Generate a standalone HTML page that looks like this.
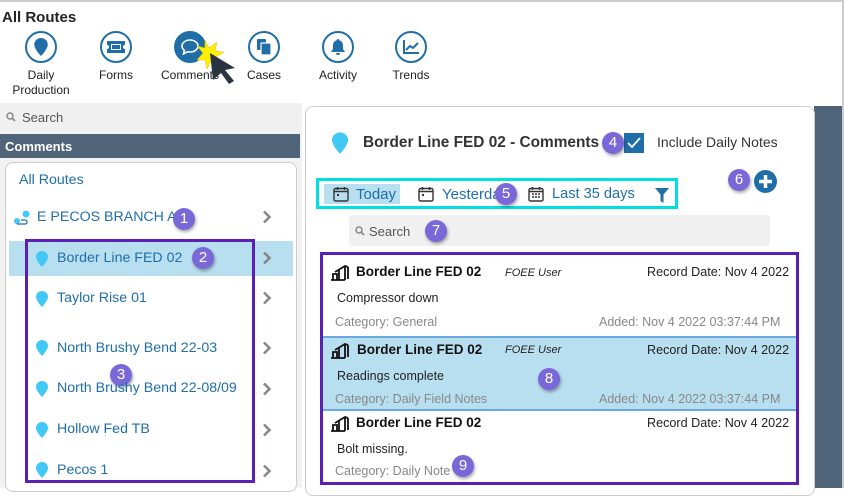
<!DOCTYPE html>
<html><head><meta charset="utf-8"><style>
*{box-sizing:border-box;margin:0;padding:0}
body{width:844px;height:488px;position:relative;overflow:hidden;background:#fff;font-family:"Liberation Sans",sans-serif;}
.a{position:absolute}
.frame{left:0;top:0;width:844px;height:488px;border-top:2px solid #ccc;border-right:2px solid #ccc}
.ic{width:32px;height:32px;border:2px solid #1f6ea8;border-radius:50%;display:flex;align-items:center;justify-content:center}
.lbl{font-size:12px;color:#222;text-align:center;width:80px;line-height:15px}
.item{font-size:14.2px;color:#1f6ea8;white-space:nowrap}
.tb{font-size:15px;color:#1f6ea8;white-space:nowrap}
.chev{width:10px;height:14px}
.badge{width:22px;height:22px;border-radius:50%;background:#7b68d8;color:#fff;font-size:15px;text-align:center;line-height:22px;box-shadow:1px 2px 3px rgba(0,0,0,.35)}
.pin{width:12px;height:16px}
.ct{font-size:13.5px;font-weight:bold;color:#111}
.cu{font-size:11px;font-style:italic;color:#222}
.cr{font-size:12.6px;color:#222}
.cb{font-size:12.5px;color:#222}
.cg{font-size:12.5px;color:#888}
</style></head><body>
<div class="a frame"></div>
<div class="a" style="left:2px;top:9px;font-size:15px;font-weight:bold;color:#222">All Routes</div>

<div class="a ic" style="left:25px;top:31px"><svg width="14" height="18" viewBox="0 0 12 16"><path d="M6 0C2.7 0 0 2.6 0 5.8 0 10 6 16 6 16s6-6 6-10.2C12 2.6 9.3 0 6 0z" fill="#1f6ea8"/></svg></div>
<div class="a lbl" style="left:1px;top:68px">Daily<br>Production</div>
<div class="a ic" style="left:100px;top:31px"><svg width="20" height="14" viewBox="0 0 20 14"><path d="M1 1h18v4a2 2 0 0 0 0 4v4H1V9a2 2 0 0 0 0-4z" fill="#1f6ea8"/><rect x="5" y="4" width="10" height="6" fill="#fff"/><rect x="6" y="5" width="8" height="4" fill="#1f6ea8"/></svg></div>
<div class="a lbl" style="left:76px;top:68px">Forms</div>
<div class="a ic" style="left:174px;top:31px;background:#1f6ea8"><svg width="18" height="16" viewBox="0 0 18 16"><path d="M9 1C4.6 1 1 3.7 1 7c0 1.7.9 3.2 2.4 4.3L2.5 15l4-2.3c.8.2 1.6.3 2.5.3 4.4 0 8-2.7 8-6S13.4 1 9 1z" fill="none" stroke="#fff" stroke-width="1.6"/></svg></div>
<div class="a lbl" style="left:150px;top:68px">Comments</div>
<svg class="a" style="left:195px;top:38px" width="45" height="48" viewBox="0 0 45 48"><polygon points="10,2 14,10 22,4 20,13 29,14 21,19 26,27 16,23 12,31 10,22 2,22 8,15 2,8 10,10" fill="#ffef00" stroke="#e0c000" stroke-width=".5"/><polygon points="15,15 40,30 30,32 39,43 34,46 26,35 18,42" fill="#2a3440"/></svg>
<div class="a ic" style="left:248px;top:31px"><svg width="16" height="18" viewBox="0 0 16 18"><rect x="1" y="1" width="9" height="11" rx="1" fill="#1f6ea8"/><rect x="5" y="5" width="10" height="12" rx="1" fill="#1f6ea8" stroke="#fff" stroke-width="1.2"/></svg></div>
<div class="a lbl" style="left:224px;top:68px">Cases</div>
<div class="a ic" style="left:322px;top:31px"><svg width="16" height="18" viewBox="0 0 16 18"><path d="M8 1c-.8 0-1.3.6-1.3 1.3C4.3 3 3 5 3 7.5V11l-2 3h14l-2-3V7.5C13 5 11.7 3 9.3 2.3 9.3 1.6 8.8 1 8 1zM6 15a2 2 0 0 0 4 0z" fill="#1f6ea8"/></svg></div>
<div class="a lbl" style="left:298px;top:68px">Activity</div>
<div class="a ic" style="left:395px;top:31px"><svg width="18" height="16" viewBox="0 0 18 16"><path d="M2 1v13h15" fill="none" stroke="#1f6ea8" stroke-width="2"/><path d="M4 11l4-4 3 2 5-5" fill="none" stroke="#1f6ea8" stroke-width="2"/></svg></div>
<div class="a lbl" style="left:371px;top:68px">Trends</div>

<div class="a" style="left:0;top:103px;width:302px;height:385px;background:#f2f2f2"></div>
<div class="a" style="left:0;top:105px;width:300px;height:27px;background:#f0f0f0;border-radius:4px 4px 0 0"></div>
<svg class="a" style="left:6px;top:112px" width="10" height="10" viewBox="0 0 10 10"><circle cx="4" cy="4" r="3" fill="none" stroke="#888" stroke-width="1.5"/><path d="M6 6l3 3" stroke="#888" stroke-width="1.8"/></svg>
<div class="a" style="left:22px;top:110px;font-size:13px;color:#555">Search</div>
<div class="a" style="left:0;top:134px;width:300px;height:24px;background:#4f6479"></div>
<div class="a" style="left:5px;top:139px;font-size:13px;font-weight:bold;color:#fff">Comments</div>
<div class="a" style="left:5px;top:162px;width:292px;height:330px;background:#fff;border:1px solid #ccc;border-radius:8px"></div>
<div class="a item" style="left:19px;top:172px">All Routes</div>
<svg class="a" style="left:13px;top:209px" width="18" height="18" viewBox="0 0 18 18"><circle cx="4" cy="12" r="3" fill="#42c8f5"/><circle cx="13" cy="5" r="3.5" fill="#42c8f5"/><path d="M4 15h8a2 2 0 0 0 0-4H8" fill="none" stroke="#1f6ea8" stroke-width="1.3"/></svg>
<div class="a item" style="left:37px;top:209px">E PECOS BRANCH A</div>
<div class="a badge" style="left:173px;top:208px">1</div>
<div class="a" style="left:9px;top:241px;width:284px;height:35px;background:#b8dff0"></div>
<div class="a" style="left:25px;top:239px;width:230px;height:244px;border:3px solid #5a20b5"></div>
<div class="a badge" style="left:192px;top:247px">2</div>
<div class="a badge" style="left:110px;top:364px">3</div>

<svg class="a chev" style="left:262px;top:210px" viewBox="0 0 10 14"><path d="M2 1.5l5.5 5.5L2 12.5" fill="none" stroke="#888" stroke-width="2.6"/></svg>
<svg class="a chev" style="left:262px;top:251px" viewBox="0 0 10 14"><path d="M2 1.5l5.5 5.5L2 12.5" fill="none" stroke="#888" stroke-width="2.6"/></svg>
<svg class="a chev" style="left:262px;top:291px" viewBox="0 0 10 14"><path d="M2 1.5l5.5 5.5L2 12.5" fill="none" stroke="#888" stroke-width="2.6"/></svg>
<svg class="a chev" style="left:262px;top:341px" viewBox="0 0 10 14"><path d="M2 1.5l5.5 5.5L2 12.5" fill="none" stroke="#888" stroke-width="2.6"/></svg>
<svg class="a chev" style="left:262px;top:382px" viewBox="0 0 10 14"><path d="M2 1.5l5.5 5.5L2 12.5" fill="none" stroke="#888" stroke-width="2.6"/></svg>
<svg class="a chev" style="left:262px;top:423px" viewBox="0 0 10 14"><path d="M2 1.5l5.5 5.5L2 12.5" fill="none" stroke="#888" stroke-width="2.6"/></svg>
<svg class="a chev" style="left:262px;top:464px" viewBox="0 0 10 14"><path d="M2 1.5l5.5 5.5L2 12.5" fill="none" stroke="#888" stroke-width="2.6"/></svg>

<svg class="a pin" style="left:36px;top:251px" viewBox="0 0 12 16"><path d="M6 0C2.7 0 0 2.6 0 5.8 0 10 6 16 6 16s6-6 6-10.2C12 2.6 9.3 0 6 0z" fill="#42c8f5"/></svg>
<div class="a item" style="left:57px;top:250px">Border Line FED 02</div>
<svg class="a pin" style="left:36px;top:291px" viewBox="0 0 12 16"><path d="M6 0C2.7 0 0 2.6 0 5.8 0 10 6 16 6 16s6-6 6-10.2C12 2.6 9.3 0 6 0z" fill="#42c8f5"/></svg>
<div class="a item" style="left:57px;top:290px">Taylor Rise 01</div>
<svg class="a pin" style="left:36px;top:340px" viewBox="0 0 12 16"><path d="M6 0C2.7 0 0 2.6 0 5.8 0 10 6 16 6 16s6-6 6-10.2C12 2.6 9.3 0 6 0z" fill="#42c8f5"/></svg>
<div class="a item" style="left:57px;top:340px">North Brushy Bend 22-03</div>
<svg class="a pin" style="left:36px;top:381px" viewBox="0 0 12 16"><path d="M6 0C2.7 0 0 2.6 0 5.8 0 10 6 16 6 16s6-6 6-10.2C12 2.6 9.3 0 6 0z" fill="#42c8f5"/></svg>
<div class="a item" style="left:57px;top:380px">North Brushy Bend 22-08/09</div>
<svg class="a pin" style="left:36px;top:422px" viewBox="0 0 12 16"><path d="M6 0C2.7 0 0 2.6 0 5.8 0 10 6 16 6 16s6-6 6-10.2C12 2.6 9.3 0 6 0z" fill="#42c8f5"/></svg>
<div class="a item" style="left:57px;top:421px">Hollow Fed TB</div>
<svg class="a pin" style="left:36px;top:462px" viewBox="0 0 12 16"><path d="M6 0C2.7 0 0 2.6 0 5.8 0 10 6 16 6 16s6-6 6-10.2C12 2.6 9.3 0 6 0z" fill="#42c8f5"/></svg>
<div class="a item" style="left:57px;top:462px">Pecos 1</div>

<div class="a" style="left:814px;top:106px;width:28px;height:382px;background:#4f6479"></div>
<div class="a" style="left:305px;top:106px;width:510px;height:390px;background:#fff;border:1px solid #ccc;border-radius:8px"></div>
<svg class="a" style="left:332px;top:132px" width="16" height="22" viewBox="0 0 12 16"><path d="M6 0C2.7 0 0 2.6 0 5.8 0 10 6 16 6 16s6-6 6-10.2C12 2.6 9.3 0 6 0z" fill="#42c8f5"/></svg>
<div class="a" style="left:363px;top:134px;font-size:15.4px;font-weight:bold;color:#333">Border Line FED 02 - Comments</div>
<div class="a" style="left:624px;top:133px;width:20px;height:20px;background:#1f6ea8"><svg width="20" height="20" viewBox="0 0 20 20"><path d="M4 10l4 4 8-9" fill="none" stroke="#fff" stroke-width="1.8"/></svg></div>
<div class="a badge" style="left:602px;top:132px">4</div>
<div class="a" style="left:657px;top:134px;font-size:14px;color:#333">Include Daily Notes</div>

<div class="a" style="left:316px;top:178px;width:362px;height:31px;border:3px solid #00e0e0"></div>
<div class="a" style="left:324px;top:184px;width:76px;height:20px;background:#b8dff0"></div>
<svg class="a" style="left:333px;top:186px" width="16" height="16" viewBox="0 0 16 16"><rect x="1" y="2.5" width="14" height="12.5" rx="1.5" fill="none" stroke="#333" stroke-width="1.4"/><path d="M1 5.5h14M4.5 1v3M11.5 1v3" stroke="#333" stroke-width="1.4"/><rect x="4" y="8" width="2" height="2" fill="#333"/></svg>
<div class="a tb" style="left:356px;top:186px">Today</div>
<svg class="a" style="left:418px;top:186px" width="16" height="16" viewBox="0 0 16 16"><rect x="1" y="2.5" width="14" height="12.5" rx="1.5" fill="none" stroke="#333" stroke-width="1.4"/><path d="M1 5.5h14M4.5 1v3M11.5 1v3" stroke="#333" stroke-width="1.4"/><rect x="4" y="8" width="2" height="2" fill="#333"/></svg>
<div class="a tb" style="left:442px;top:186px">Yesterda</div>
<div class="a badge" style="left:495px;top:183px">5</div>
<svg class="a" style="left:528px;top:186px" width="16" height="16" viewBox="0 0 16 16"><rect x="1" y="2.5" width="14" height="12.5" rx="1.5" fill="none" stroke="#333" stroke-width="1.4"/><path d="M1 5.5h14M4.5 1v3M11.5 1v3" stroke="#333" stroke-width="1.4"/><path d="M4 8h2M7 8h2M10 8h2M4 11h2M7 11h2M10 11h2" stroke="#333" stroke-width="1.4"/></svg>
<div class="a tb" style="left:552px;top:186px;font-size:14.6px">Last 35 days</div>
<svg class="a" style="left:655px;top:188px" width="14" height="15" viewBox="0 0 14 15"><path d="M0 0h14L8.5 6.5V15L5.5 13V6.5z" fill="#1f6ea8"/></svg>
<div class="a badge" style="left:728px;top:169px">6</div>
<div class="a" style="left:754px;top:170px;width:23px;height:23px;border-radius:50%;background:#1f6ea8"><svg width="23" height="23" viewBox="0 0 23 23"><path d="M11.5 5v13M5 11.5h13" stroke="#fff" stroke-width="3.5"/></svg></div>

<div class="a" style="left:349px;top:215px;width:421px;height:31px;background:#f0f0f0;border-radius:4px"></div>
<svg class="a" style="left:355px;top:226px" width="10" height="10" viewBox="0 0 10 10"><circle cx="4" cy="4" r="3" fill="none" stroke="#888" stroke-width="1.5"/><path d="M6 6l3 3" stroke="#888" stroke-width="1.8"/></svg>
<div class="a" style="left:369px;top:224px;font-size:13px;color:#555">Search</div>
<div class="a badge" style="left:425px;top:220px">7</div>

<div class="a" style="left:320px;top:252px;width:479px;height:233px;border:3px solid #5a20b5"></div>
<div class="a" style="left:323px;top:336px;width:473px;height:75px;background:#b8dff0;border-top:2px solid #6aa8e0;border-bottom:2px solid #6aa8e0"></div>

<svg class="a" style="left:330px;top:263px" width="20" height="18" viewBox="0 0 20 18"><path d="M1 17h14M3 17V11h4v6M9 17V7M5 9l10-6 3 1M15 3v14M18 4v12" fill="none" stroke="#111" stroke-width="1.8"/></svg>
<div class="a ct" style="left:356px;top:264px">Border Line FED 02</div>
<div class="a cu" style="left:505px;top:267px">FOEE User</div>
<div class="a cr" style="left:647px;top:265px">Record Date: Nov 4 2022</div>
<div class="a cb" style="left:337px;top:291px">Compressor down</div>
<div class="a cg" style="left:335px;top:315px">Category: General</div>
<div class="a cg" style="left:599px;top:315px">Added: Nov 4 2022 03:37:44 PM</div>

<svg class="a" style="left:330px;top:341px" width="20" height="18" viewBox="0 0 20 18"><path d="M1 17h14M3 17V11h4v6M9 17V7M5 9l10-6 3 1M15 3v14M18 4v12" fill="none" stroke="#111" stroke-width="1.8"/></svg>
<div class="a ct" style="left:357px;top:342px">Border Line FED 02</div>
<div class="a cu" style="left:505px;top:344px">FOEE User</div>
<div class="a cr" style="left:647px;top:343px">Record Date: Nov 4 2022</div>
<div class="a cb" style="left:337px;top:369px">Readings complete</div>
<div class="a badge" style="left:538px;top:368px">8</div>
<div class="a cg" style="left:335px;top:392px">Category: Daily Field Notes</div>
<div class="a cg" style="left:599px;top:392px">Added: Nov 4 2022 03:37:44 PM</div>

<svg class="a" style="left:330px;top:414px" width="20" height="18" viewBox="0 0 20 18"><path d="M1 17h14M3 17V11h4v6M9 17V7M5 9l10-6 3 1M15 3v14M18 4v12" fill="none" stroke="#111" stroke-width="1.8"/></svg>
<div class="a ct" style="left:356px;top:415px">Border Line FED 02</div>
<div class="a cr" style="left:647px;top:416px">Record Date: Nov 4 2022</div>
<div class="a cb" style="left:337px;top:442px">Bolt missing.</div>
<div class="a cg" style="left:335px;top:464px">Category: Daily Note</div>
<div class="a badge" style="left:452px;top:455px">9</div>
</body></html>
